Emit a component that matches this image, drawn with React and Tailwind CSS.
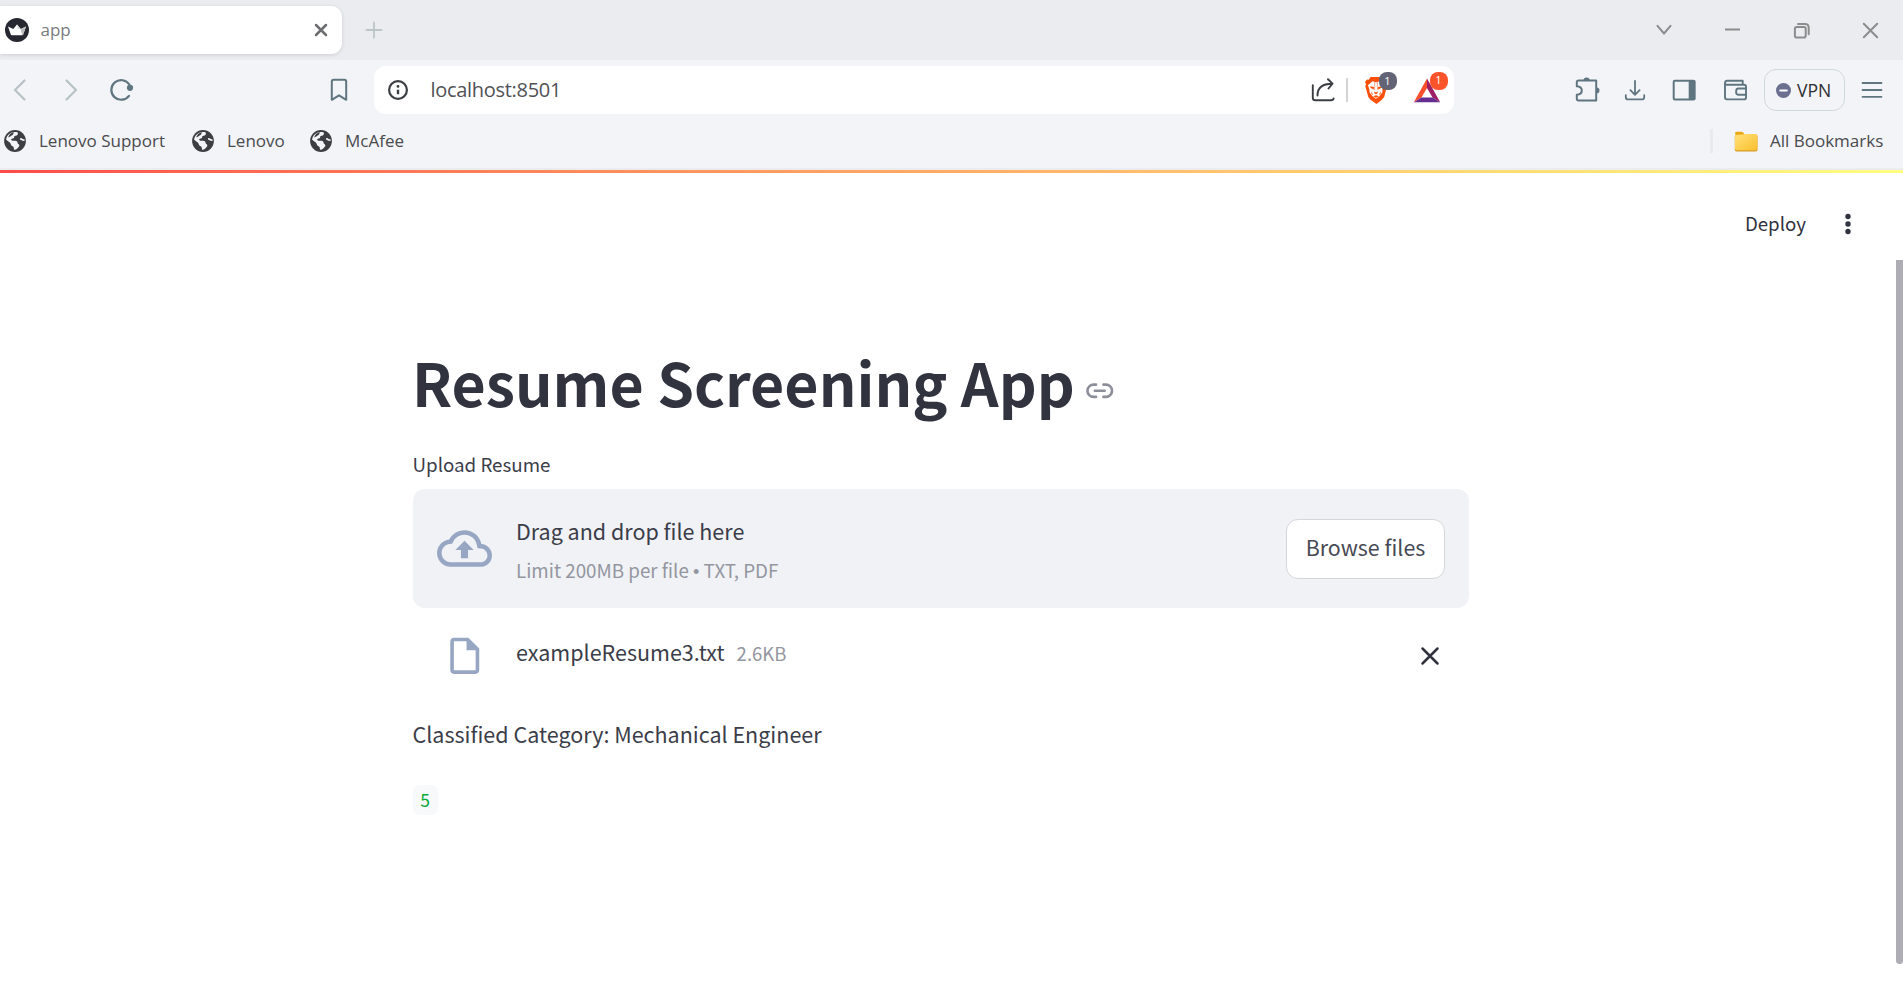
const Svg = ({ w, h, className = '', children, sw = 2, vb }) => (
  <svg width={w} height={h} viewBox={vb || `0 0 ${w} ${h}`} fill="none" stroke="currentColor" strokeWidth={sw} strokeLinecap="round" strokeLinejoin="round" className={`shrink-0 ${className}`}>
    {children}
  </svg>
);

const Crown = () => (
  <Svg w={24} h={24} className="ml-[5px]" sw={0}>
    <circle cx="12" cy="12" r="12" fill="#262730" />
    <path d="M3 8.600 8.300 11 12 6.600l3.700 4.400 5.300-2.400-2.800 8c-.2.500-.5.700-1 .7H6.800c-.5 0-.8-.2-1-.7z" fill="#fff" />
    <path d="M15.700 11 21 8.600l-2.800 8c-.2.500-.5.700-1 .7z" fill="#b9b9be" />
    <path d="M12 6.600 15.700 11 12.500 11z" fill="#dedee0" />
  </Svg>
);

const Globe = () => (
  <Svg w={22} h={22} sw={0} vb="1.500 1.500 21 21">
    <circle cx="12" cy="12" r="10.400" fill="#3b3f43" />
    <path d="M14.600 3.900c.6 1.900-.4 3-2 3.100-1.300.1-1.400.5-1.400 1.500 0 1-1.100 1.200-2.100 1.300-.9.1-.8.9-.4 1.500.5.700 1.900.5 3.500.5 1.900 0 2.200 1 2.300 2.200.2 1.200 1.500.9 1.600 2.200.1 1-.9 1.500-1.300 2.300-.4.700-1.500 1.900-3.300 1.900-.8 0-.7-.9-.7-1.800 0-1.600-1.200-1.300-2.200-2.300-.7-.7-.5-1.900-1.600-2.900L3.500 10.800C4.100 6.500 7.600 3.500 12 3.500c.9 0 1.800.1 2.600.4z" fill="#f3f4f7" />
    <path d="M3.300 11.100 7 14.400c.9.900.7 2.200 1.600 2.900 1 .9 2.100.7 2.100 2.300v1c-4.500-.4-7.700-4.500-7.400-9.500z" fill="#3b3f43" />
    <path d="M5.500 8.500c1.500.2 2.200-1.200 3.300-1.700 1.600-.6 1.500-2 2.200-3.200-2.500.3-4.800 2.200-5.500 4.900z" fill="#3b3f43" />
    <path d="M17.500 10c1.100.3 1.600 1.300 3 1.200" stroke="#f3f4f7" strokeWidth="1.600" />
  </Svg>
);

const Bookmark = ({ label, className }) => (
  <div className={`flex shrink-0 items-center gap-[13px] ${className}`}>
    <Globe />
    <span>{label}</span>
  </div>
);

const TabStrip = () => (
  <div className="flex h-[60px] items-center bg-[#ebecf0]">
    <div className="flex h-[48px] w-[342px] shrink-0 items-center rounded-r-[11px] bg-white text-[17px] text-[#7a7b7d] shadow-[0_1px_4px_rgba(0,0,0,0.12)]">
      <Crown />
      <span className="ml-[11.500px] w-[273px]">app</span>
      <Svg w={14} h={14} sw={2.5} className="text-[#6c6d70]"><path d="M2 2l10 10M12 2 2 12" /></Svg>
    </div>
    <Svg w={18} h={18} className="ml-[23px] text-[#bcc5c8]" sw={1.8}><path d="M9 1.500v15M1.500 9h15" /></Svg>
    <div className="ml-auto flex items-center text-[#8c8c8d]">
      <Svg w={18} h={12} className="mr-[51px]" sw={2}><path d="M2.500 1.800 9 9.500l6.500-7.700" /></Svg>
      <Svg w={17} h={4} className="mr-[52px]" sw={2}><path d="M2 1.500h13" strokeLinecap="square" /></Svg>
      <Svg w={17} h={17} className="mr-[52px]" sw={2}><rect x="1.900" y="5" width="10.800" height="10.500" rx="1.800" /><path d="M5 2h7c2.500 0 3.700 1.300 3.700 3.700v6.500" /></Svg>
      <Svg w={17} h={17} className="mr-[24px]" sw={2}><path d="M1.800 1.800l13.400 13.400M15.200 1.800 1.800 15.200" /></Svg>
    </div>
  </div>
);

const Shield = () => (
  <Svg w={24} h={28} sw={0}>
    <path d="M6.500 1h10l3 2.700 2 .2 1 3.100-.6 1.800L22.500 12l-2.300 9-2.300 2.800L12.500 28 6.500 23.800 4.300 21 1.300 10l.8-1.500L1 6l2-2.500 1.800.2z" fill="#fb4f0a" />
    <path d="M8.500 5.200 12 6.200l3.700-1 4.200 4-1.400 3.600-.2 3.600-3.200 4.200-3.200 2.200-3.200-2.200-3.100-4.100-.3-3.500L3.900 9.200z" fill="#fff" />
    <path d="M6 10.200l4 .9-.3 2.300-2.900-1.300zM18 10.200l-4 .9.300 2.300 2.900-1.300zM10 15.600l2 .8 2-.8-.6 1.900-1.400.8-1.400-.8zM9 20.300l3-1 3 1-3 1.400zM7 15.500l.7 3 1 .7-.4-2.300zM17 15.500l-.7 3-1 .7.4-2.300z" fill="#fb4f0a" />
    <path d="M10.700 6v4.500l-.4 3.200M13.300 6v4.500l.4 3.200" stroke="#fb4f0a" strokeWidth=".5" />
  </Svg>
);

const Triangle = () => (
  <Svg w={28} h={25} sw={0}>
    <path d="M14 .5.800 24.200l7.700-4.700L14 10z" fill="#fa4f2b" />
    <path d="M14 .5 27.200 24.200l-7.700-4.700L14 10z" fill="#9e1f63" />
    <path d="M.8 24.200h26.400l-7.700-4.700h-11z" fill="#662d91" />
  </Svg>
);

const AddressBar = () => (
  <div className="ml-[26px] flex h-[48px] w-[1080px] shrink-0 items-center rounded-[12px] bg-white text-[#3b3e42]">
    <Svg w={22} h={22} className="ml-[13px]" sw={2.2}><circle cx="11" cy="11" r="8.900" /><path d="M11 10.700v4.500" strokeLinecap="butt" strokeWidth="2.400" /><circle cx="11" cy="7.400" r="1.400" fill="currentColor" stroke="none" /></Svg>
    <span className="ml-[21.500px] text-[20px] tracking-[-0.015em] text-[#505155]">localhost:8501</span>
    <Svg w={24} h={24} className="ml-auto" sw={1.9}><path d="M1.800 7.200v12.500c0 1.800.8 2.600 2.600 2.600h15.700c1.500 0 2.300-.5 2.500-1.900" /><path d="M6.500 17.500C6.500 10.500 10 5.700 21 5.700M17 1.200l4.500 4.400-4 4.900" /></Svg>
    <div className="ml-[11px] h-[24px] w-[2px] bg-[#d4d4d6]" />
    <div className="relative ml-[15.500px]">
      <Shield />
      <span className="absolute -top-[4px] left-[15px] flex h-[18px] w-[18px] items-center justify-center rounded-[8px] bg-[#626475] text-[11px] text-white">1</span>
    </div>
    <div className="relative mr-[13.500px] ml-[25px]">
      <Triangle />
      <span className="absolute -top-[6px] left-[17px] flex h-[18px] w-[18px] items-center justify-center rounded-[8px] bg-[#fb542b] text-[11px] text-white">1</span>
    </div>
  </div>
);

const Toolbar = () => (
  <div className="flex h-[60px] items-center text-[#5f7580]">
    <Svg w={14} h={24} className="ml-[12.500px] text-[#b7c2c6]" sw={2.2}><path d="M11.500 2.500 2 12l9.500 9.500" /></Svg>
    <Svg w={14} h={24} className="ml-[37px] text-[#b7c2c6]" sw={2.2}><path d="M2.500 2.500 12 12l-9.500 9.500" /></Svg>
    <Svg w={26} h={24} className="ml-[31px]" sw={2.2}><path d="M20 17.800A9.800 9.800 0 1 1 20.300 6.500" /><circle cx="21" cy="9.800" r="3.100" fill="currentColor" stroke="none" /></Svg>
    <Svg w={18} h={24} className="ml-[195.500px]" sw={2}><path d="M1.800 3.500c0-1 .6-1.700 1.700-1.700h11c1.100 0 1.700.7 1.700 1.700v18.300L9 17.300l-7.200 4.500z" /></Svg>
    <AddressBar />
    <Svg w={26} h={26} className="mb-[2px] ml-auto" sw={2}><path d="M3.200 4.500h18v20h-18c-1.200 0-1.400-.5-1.400-1.400v-4.300c3.500-.2 5-2 5-4.300s-1.500-4-5-4.300V6c0-1 .4-1.500 1.400-1.500z" /><path d="M8.500 4.500a3 3 0 0 1 6.200 0zM21.500 11.500a3 3 0 0 1 0 6z" fill="currentColor" stroke="none" /></Svg>
    <Svg w={22} h={22} className="ml-[22.500px]" sw={1.800}><path d="M11 1.800v14M6.400 11.200l4.600 4.600 4.600-4.600M1.800 16.200v2c0 1.500.6 2.200 2.200 2.200h14c1.600 0 2.200-.7 2.200-2.200v-2" /></Svg>
    <Svg w={24} h={22} className="ml-[26.500px]" sw={2}><rect x="1.700" y="1.700" width="20.800" height="18.800" rx="1" /><path d="M17.500 2h5v18.300h-5z" fill="currentColor" stroke="currentColor" strokeWidth="1.600" /></Svg>
    <Svg w={25} h={22} className="ml-[26.500px]" sw={1.900}><path d="M2 3.800v14.500c0 1.400.7 2.100 2 2.100h17c1.300 0 2-.7 2-2V7.500c0-1.200-.7-1.800-2-1.800H3.700C1.500 5.700 1.500 1.700 4 1.700h15.700v4" /><path d="M23 9.500h-7.500c-1.600 0-2.300.7-2.300 2.200v1.800c0 1.500.7 2.200 2.300 2.200H23" /></Svg>
    <div className="ml-[16.500px] flex h-[42px] w-[81px] items-center rounded-[12px] border border-[#cfd8dd] text-[#2c2e34]">
      <Svg w={15} h={15} className="ml-[11px]" sw={2.2}><circle cx="7.500" cy="7.500" r="7.500" fill="#6b7090" stroke="none" /><path d="M4.300 7.500h6.400" stroke="#fff" /></Svg>
      <span className="ml-[6px] text-[17.500px]">VPN</span>
    </div>
    <Svg w={22} h={18} className="mr-[20px] ml-[16px]" sw={1.800}><path d="M1.500 2h19M1.500 9h19M1.500 15.800h19" /></Svg>
  </div>
);

const BookmarksBar = () => (
  <div className="flex h-[50px] items-start border-b-2 border-[#ebecf0] text-[17px] leading-[42px] text-[#4a4b4f]">
    <div className="flex h-[42px] flex-1 items-center">
      <Bookmark label="Lenovo Support" className="ml-[4px] w-[188px]" />
      <Bookmark label="Lenovo" className="w-[118px]" />
      <Bookmark label="McAfee" />
      <div className="mr-[21px] ml-auto h-[24px] w-[3px] bg-[#e9eaee]" />
      <Svg w={24} h={21} sw={0}>
        <defs><linearGradient id="folder" x1="0" y1="0" x2="1" y2="1"><stop offset="0" stopColor="#ffe07a" /><stop offset="1" stopColor="#fcc02d" /></linearGradient></defs>
        <path d="M1 2.500C1 1.500 1.700 1 2.500 1h6l2 2.300z" fill="#e5a00b" />
        <rect x=".8" y="3.500" width="22.700" height="17" rx="1.800" fill="#d99a24" />
        <rect x="1" y="3" width="22.300" height="16.300" rx="1.800" fill="url(#folder)" />
        <path d="M1.500 4V2.200C1.500 1.200 2 .7 3 .7h5l2 2.500z" fill="#e9a714" />
      </Svg>
      <span className="ml-[12px] w-[133px]">All Bookmarks</span>
    </div>
  </div>
);

const AppHeader = () => (
  <div className="flex h-[87px] shrink-0 items-center justify-end pt-[14px] text-[18.700px] text-[#31333f]">
    <span className="pb-[2px] leading-[28px]">Deploy</span>
    <Svg w={8} h={22} className="mr-[51px] ml-[38px]" sw={0}><circle cx="4" cy="3.500" r="2.700" fill="currentColor" /><circle cx="4" cy="11" r="2.700" fill="currentColor" /><circle cx="4" cy="18.500" r="2.700" fill="currentColor" /></Svg>
  </div>
);

const Dropzone = () => (
  <div className="flex h-[119px] items-center rounded-[12px] bg-[#f0f2f6] pr-6 pl-6">
    <svg width="55" height="55" viewBox="0 0 24 24" fill="#97a6c3" className="shrink-0"><path d="M19.350 10.040A7.490 7.490 0 0 0 12 4C9.110 4 6.600 5.640 5.350 8.040A5.994 5.994 0 0 0 0 14c0 3.310 2.690 6 6 6h13c2.760 0 5-2.240 5-5 0-2.640-2.050-4.780-4.650-4.960zM19 18H6c-2.210 0-4-1.790-4-4 0-2.050 1.530-3.760 3.560-3.970l1.070-.11.5-.95A5.469 5.469 0 0 1 12 6c2.620 0 4.880 1.860 5.390 4.430l.3 1.500 1.530.11A2.980 2.980 0 0 1 22 15c0 1.650-1.350 3-3 3zM8 12.600h2.450v3.600h3.100v-3.600H16l-4-4z" /></svg>
    <div className="ml-6 flex-1 pt-[6px]">
      <div className="text-[21.500px] leading-[38px] text-[#3b3d49]">Drag and drop file here</div>
      <div className="text-[18.800px] leading-[40px] text-[#9496a0]">Limit 200MB per file <span className="font-['Liberation_Sans'] text-[18px]">•</span> TXT, PDF</div>
    </div>
    <button className="h-[60px] w-[159px] rounded-[12px] border border-[#d5d6da] bg-white pb-[4px] text-[21.400px] leading-[40px] text-[#474954]">Browse files</button>
  </div>
);

const UploadedFile = () => (
  <div className="flex h-[96px] items-center pl-[30px] text-[#31333f]">
    <svg width="43.500" height="43.500" viewBox="0 0 24 24" fill="#97a6c3" className="shrink-0"><path d="M6 2c-1.100 0-1.990.9-1.990 2L4 20c0 1.100.89 2 1.990 2H18c1.100 0 2-.9 2-2V8l-6-6H6zm0 2h7v5h5v11H6V4z" /></svg>
    <span className="ml-[29.500px] pb-[9px] text-[21.500px] leading-[36px] text-[#3b3d49]">exampleResume3.txt</span>
    <span className="ml-[12px] pb-[7px] text-[18.500px] leading-[36px] text-[#9496a0]">2.6KB</span>
    <Svg w={20} h={20} className="mr-[29px] ml-auto" sw={2.5}><path d="M2.500 2.500l15 15M17.500 2.500l-15 15" /></Svg>
  </div>
);

const Page = () => (
  <div className="flex flex-1">
    <main className="ml-[413px] w-[1056px] pt-[82px] text-[#31333f]">
      <h1 className="-ml-px flex h-[79px] items-center text-[59px] leading-[79px] font-bold">
        <span>Resume Screening App</span>
        <Svg w={29.5} h={29.5} vb="0 0 24 24" sw={2.1} className="mt-[18px] ml-[10px] text-[#8c8e99]"><path d="M9 17H7A5 5 0 0 1 7 7h2M15 7h2a5 5 0 0 1 0 10h-2M8 12h8" /></Svg>
      </h1>
      <div className="mt-[29px] -ml-[0.500px] h-[39px] text-[18.750px] leading-[28px] text-[#3b3d49]">Upload Resume</div>
      <Dropzone />
      <UploadedFile />
      <p className="mt-[10px] -ml-[0.500px] text-[21.500px] leading-[40px] text-[#3b3d49]">Classified Category: Mechanical Engineer</p>
      <code className="mt-[31px] flex h-[30px] w-[25px] items-center justify-center rounded-[6px] bg-[#f8f9fb] pr-px font-['Noto_Sans_CJK_SC',sans-serif] text-[17.500px] leading-[30px] text-[#09ab3b]">5</code>
    </main>
    <div className="ml-auto h-[704px] w-[7px] rounded-b-[4px] bg-[#aeadb3]" />
  </div>
);

export default function App() {
  return (
    <div className="flex h-[1005px] w-[1903px] flex-col overflow-hidden bg-white font-['Noto_Sans_CJK_SC',sans-serif]">
      <div className="shrink-0 bg-[#f3f4f7] font-['Open_Sans',sans-serif]">
        <TabStrip />
        <Toolbar />
        <BookmarksBar />
      </div>
      <div className="h-[3px] shrink-0 bg-linear-to-r from-[#ff4b4b] to-[#fffd80]" />
      <AppHeader />
      <Page />
    </div>
  );
}
